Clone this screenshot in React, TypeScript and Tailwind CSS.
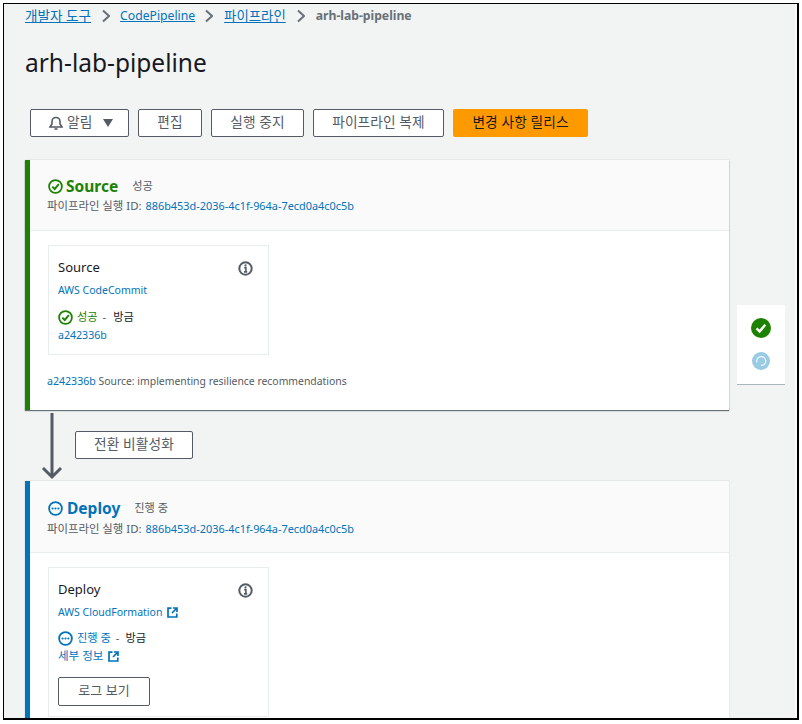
import React from "react";

const Sep = () => (
  <svg width="8" height="14" viewBox="0 0 8 14" className="shrink-0" fill="none" stroke="#687078" strokeWidth="2"><path d="M1 1.5 7 7l-6 5.5" /></svg>
);
const Btn = ({ children, className = "" }: { children: React.ReactNode; className?: string }) => (
  <div className={"h-[28px] flex items-center justify-center border border-[#545b64] rounded-[2px] bg-white text-[#545b64] text-[13.7px] tracking-[0.1px] pb-[2px] " + className}>{children}</div>
);
const Ext = () => (
  <svg width="11" height="11" viewBox="0 0 11 11" fill="none" stroke="#0073bb" strokeWidth="1.7" className="shrink-0"><path d="M4.5 1.2H1v8.8h8.8V6.5M6 1h4v4M10 1 5 6" /></svg>
);
const Info = () => (
  <svg width="15" height="15" viewBox="0 0 15 15" fill="none"><circle cx="7.5" cy="7.5" r="6.2" stroke="#545b64" strokeWidth="2" /><path d="M6.2 6.6h1.7v4M6 10.9h3.2" stroke="#545b64" strokeWidth="1.6" /><circle cx="7.5" cy="4.3" r="1.1" fill="#545b64" /></svg>
);
const Check = ({ size = 15 }: { size?: number }) => (
  <svg width={size} height={size} viewBox="0 0 15 15" fill="none" className="shrink-0"><circle cx="7.5" cy="7.5" r="6.4" stroke="#1d8102" strokeWidth="1.8" /><path d="M4.3 7.6 6.7 10 10.9 5.2" stroke="#1d8102" strokeWidth="1.9" /></svg>
);
const Dots = ({ size = 15 }: { size?: number }) => (
  <svg width={size} height={size} viewBox="0 0 15 15" fill="none" className="shrink-0"><circle cx="7.5" cy="7.5" r="6.4" stroke="#0073bb" strokeWidth="1.8" /><circle cx="4.6" cy="7.5" r="1.1" fill="#0073bb" /><circle cx="7.5" cy="7.5" r="1.1" fill="#0073bb" /><circle cx="10.4" cy="7.5" r="1.1" fill="#0073bb" /></svg>
);

const Header = ({ icon, title, status, color, titleGap, idGap, top }: { icon: React.ReactNode; title: string; status: string; color: string; titleGap: string; idGap: string; top: string }) => (
  <div className={"h-[71px] bg-[#fafafa] border-b border-[#eaeded] pl-[18px] " + top}>
    <div className="flex items-center h-[20px]">
      {icon}
      <span className={"text-[15.5px] font-bold leading-[20px] " + titleGap + " " + color}>{title}</span>
      <span className="text-[11.2px] text-[#545b64] ml-[14px]">{status}</span>
    </div>
    <div className={"text-[11.4px] leading-[16px] text-[#545b64] -ml-[1px] " + idGap}>
      파이프라인 실행 ID: <span className="text-[#0073bb] text-[10.9px] ml-[1px]">886b453d-2036-4c1f-964a-7ecd0a4c0c5b</span>
    </div>
  </div>
);

export default function App() {
  return (
    <div className="w-[802px] h-[724px] bg-white overflow-hidden" style={{ fontFamily: '"Noto Sans", "Noto Sans CJK KR", sans-serif' }}>
      <div className="ml-[3px] mt-[3px] w-[796px] h-[717px] border border-black border-r-2 border-b-2 bg-[#f2f3f3] shadow-[inset_-2px_0_0_#fafafa] overflow-hidden pl-[21px]">
        <nav className="flex items-center h-[24px]">
          <a className="text-[#0073bb] underline text-[13.6px]">개발자 도구</a>
          <span className="ml-[11px] mr-[10px]"><Sep /></span>
          <a className="text-[#0073bb] underline text-[12.2px]">CodePipeline</a>
          <span className="ml-[10px] mr-[11px]"><Sep /></span>
          <a className="text-[#0073bb] underline text-[13.4px]">파이프라인</a>
          <span className="ml-[11px] mr-[11px]"><Sep /></span>
          <span className="text-[#687078] font-bold text-[12.2px]">arh-lab-pipeline</span>
        </nav>
        <h1 className="mt-[17px] text-[24.5px] leading-[36px] text-[#16191f]">arh-lab-pipeline</h1>
        <div className="flex gap-[9px] ml-[5px] mt-[28px]">
          <Btn className="w-[99px] justify-start pl-[18px]">
            <svg width="14" height="14" viewBox="0 0 14 14" fill="none" stroke="#545b64" strokeWidth="1.6" className="mt-[2px]"><path d="M1 11h12L11 8V5.5a4 4 0 0 0-8 0V8z" /><path d="M5.5 13h3" /></svg>
            <span className="ml-[4px]">알림</span>
            <span className="ml-[11px] mt-[2px] w-0 h-0 border-x-[5px] border-x-transparent border-t-[8px] border-t-[#545b64]"></span>
          </Btn>
          <Btn className="w-[64px]">편집</Btn>
          <Btn className="w-[93px]">실행 중지</Btn>
          <Btn className="w-[131px]">파이프라인 복제</Btn>
          <div className="h-[28px] w-[135px] flex items-center justify-center rounded-[2px] bg-[#ff9900] text-[#16191f] text-[13.7px] tracking-[0.1px] pb-[2px]">변경 사항 릴리스</div>
        </div>

        <div className="flex mt-[23px]">
          <div className="w-[704px] shrink-0">
            <section className="h-[250px] bg-white border-l-[5px] border-[#1d8102] shadow-[0_1px_1px_0_#687078,0_0_1px_0_#aab7b8]">
              <Header top="pt-[16px]" titleGap="ml-[3px]" idGap="mt-[2px]" icon={<Check />} title="Source" status="성공" color="text-[#1d8102]" />
              <div className="pl-[18px] pt-[14px]">
                <div className="w-[221px] h-[110px] border border-[#eaeded] px-[9px] pt-[11px] relative">
                  <div className="text-[13px] leading-[20px] text-[#16191f]">Source</div>
                  <div className="absolute right-[15px] top-[15px]"><Info /></div>
                  <div className="text-[10.5px] leading-[16px] mt-[5px] text-[#0073bb]">AWS CodeCommit</div>
                  <div className="flex items-center mt-[10px] h-[18px] text-[11.2px]">
                    <Check size={15} />
                    <span className="ml-[4px] text-[#1d8102]">성공</span>
                    <span className="ml-[5px] text-[#545b64]">-</span>
                    <span className="ml-[7px] text-[#16191f]">방금</span>
                  </div>
                  <div className="text-[10.6px] leading-[16px] mt-[1px] text-[#0073bb]">a242336b</div>
                </div>
                <div className="mt-[18px] text-[10.4px] leading-[16px] text-[#545b64] -ml-[1px]">
                  <span className="text-[#0073bb] text-[10.6px]">a242336b</span> Source: implementing resilience recommendations
                </div>
              </div>
            </section>

            <div className="h-[71px] flex">
              <svg width="26" height="70" viewBox="0 0 26 70" fill="none" stroke="#545b64" strokeWidth="3" className="ml-[14px] mt-[1px] shrink-0"><path d="M13 2v64M4 57l9 9 9-9" /></svg>
              <Btn className="w-[118px] ml-[10px] mt-[21px]">전환 비활성화</Btn>
            </div>

            <section className="h-[261px] bg-white border-l-[5px] border-[#0073bb] shadow-[0_0_1px_0_#aab7b8]">
              <Header top="pt-[17px] h-[72px]" titleGap="ml-[4px]" idGap="mt-[3px]" icon={<Dots />} title="Deploy" status="진행 중" color="text-[#0073bb]" />
              <div className="pl-[18px] pt-[14px]">
                <div className="w-[221px] h-[150px] border border-[#eaeded] px-[9px] pt-[11px] relative">
                  <div className="text-[13px] leading-[20px] text-[#16191f]">Deploy</div>
                  <div className="absolute right-[15px] top-[15px]"><Info /></div>
                  <div className="flex items-center gap-[5px] text-[10.5px] leading-[16px] mt-[5px] text-[#0073bb]">AWS CloudFormation <Ext /></div>
                  <div className="flex items-center mt-[9px] h-[18px] text-[11.2px]">
                    <Dots size={15} />
                    <span className="ml-[4px] text-[#0073bb]">진행 중</span>
                    <span className="ml-[5px] text-[#545b64]">-</span>
                    <span className="ml-[6px] text-[#16191f]">방금</span>
                  </div>
                  <div className="flex items-center gap-[5px] text-[11.5px] leading-[16px] mt-[1px] text-[#0073bb]">세부 정보 <Ext /></div>
                  <Btn className="w-[92px] h-[29px] mt-[13px] text-[13px]">로그 보기</Btn>
                </div>
              </div>
            </section>
          </div>

          <aside className="ml-[8px] mt-[145px] w-[48px] h-[80px] bg-white border-b border-[#aab7b8] flex flex-col items-center self-start pt-[13px] gap-[14px]">
            <svg width="20" height="20" viewBox="0 0 20 20"><circle cx="10" cy="10" r="10" fill="#1d8102" /><path d="M5.5 10.3 8.6 13.4 14.3 6.8" stroke="#fff" strokeWidth="2.4" fill="none" /></svg>
            <svg width="18" height="18" viewBox="0 0 18 18" fill="none"><circle cx="9" cy="9" r="9" fill="#99cbe4" /><path d="M5 10.5A4.5 4.5 0 1 1 9 13.5" stroke="#eaf4fa" strokeWidth="1.3" /></svg>
          </aside>
        </div>
      </div>
    </div>
  );
}
